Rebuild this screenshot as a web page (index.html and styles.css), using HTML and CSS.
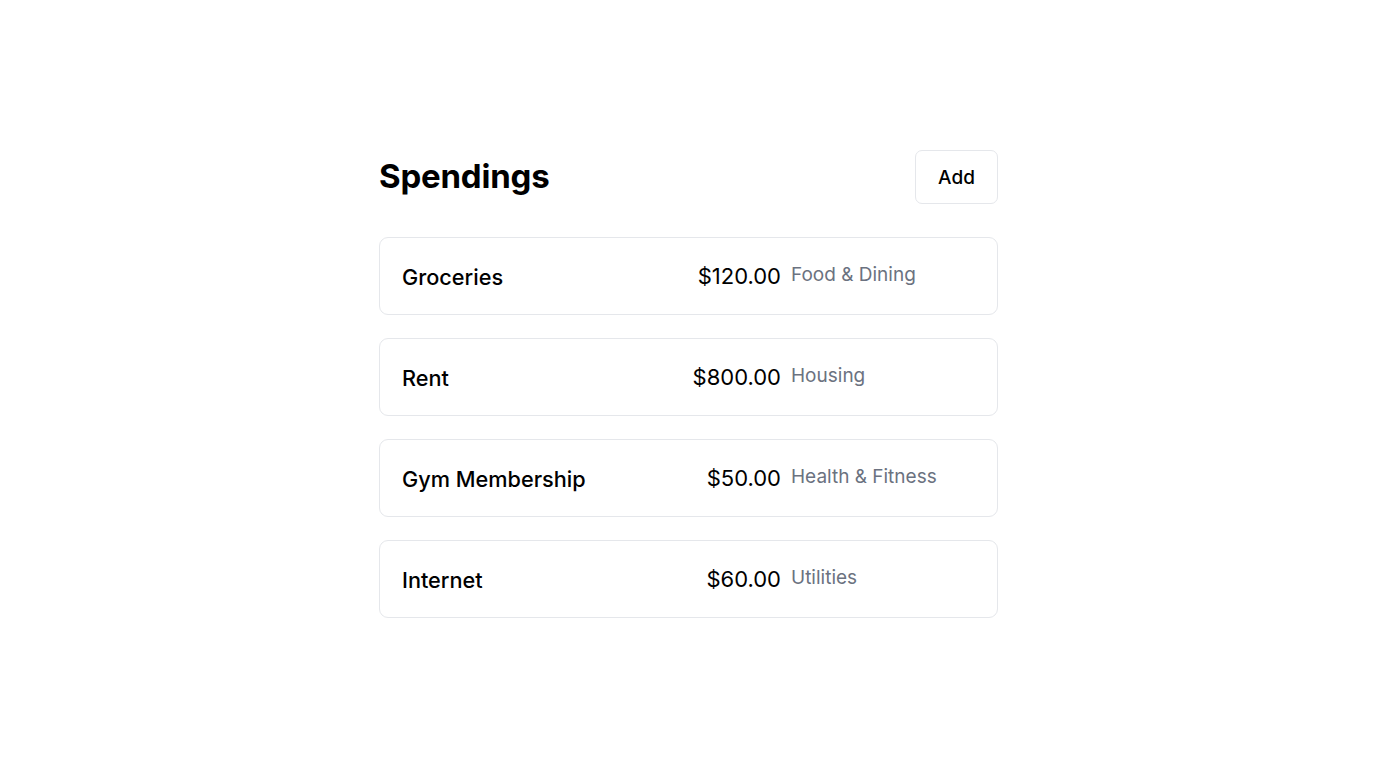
FILE: index.html
```html
<!DOCTYPE html>
<html lang="en">
<head>
<meta charset="utf-8">
<title>Spendings</title>
<link rel="stylesheet" href="styles.css">
</head>
<body>
<main class="page">
  <section class="panel">
    <header class="header">
      <h1 class="title">Spendings</h1>
      <button class="add-btn" type="button">Add</button>
    </header>
    <ul class="list">
      <li class="card">
        <span class="name">Groceries</span>
        <span class="amount">$120.00</span>
        <span class="category">Food &amp; Dining</span>
      </li>
      <li class="card">
        <span class="name">Rent</span>
        <span class="amount">$800.00</span>
        <span class="category">Housing</span>
      </li>
      <li class="card">
        <span class="name">Gym Membership</span>
        <span class="amount">$50.00</span>
        <span class="category">Health &amp; Fitness</span>
      </li>
      <li class="card">
        <span class="name">Internet</span>
        <span class="amount">$60.00</span>
        <span class="category">Utilities</span>
      </li>
    </ul>
  </section>
</main>
</body>
</html>
```
FILE: styles.css
```css
* { box-sizing: border-box; }
html, body { margin: 0; padding: 0; background: #fff; }
body {
  font-family: Inter, "Noto Sans", sans-serif;
  color: #000;
}
.page {
  min-height: 100vh;
  display: flex;
  align-items: center;
  justify-content: center;
}
.panel {
  width: 620px;
  padding-left: 1px;
}
.header {
  display: flex;
  align-items: center;
  justify-content: space-between;
  margin-bottom: 33px;
}
.title {
  margin: 0 0 2px;
  font-size: 33px;
  font-weight: 700;
  line-height: 40px;
  letter-spacing: -0.2px;
}
.add-btn {
  font-family: inherit;
  font-size: 19px;
  font-weight: 500;
  color: #000;
  background: #fff;
  border: 1px solid #e5e7eb;
  border-radius: 7px;
  width: 83px;
  height: 54px;
  padding: 0;
  cursor: pointer;
}
.list {
  list-style: none;
  margin: 0;
  padding: 0;
  display: flex;
  flex-direction: column;
  gap: 23px;
}
.card {
  display: flex;
  align-items: flex-start;
  border: 1px solid #e5e7eb;
  border-radius: 9px;
  padding: 24px 22px 20px;
  height: 78px;
}
.name {
  flex: 1;
  font-size: 21.7px;
  font-weight: 500;
  line-height: 30px;
}
.amount {
  font-size: 22px;
  line-height: 28px;
  text-align: right;
  margin-right: 10px;
}
.category {
  width: 184px;
  font-size: 19px;
  line-height: 26px;
  color: #6b7280;
}
```
